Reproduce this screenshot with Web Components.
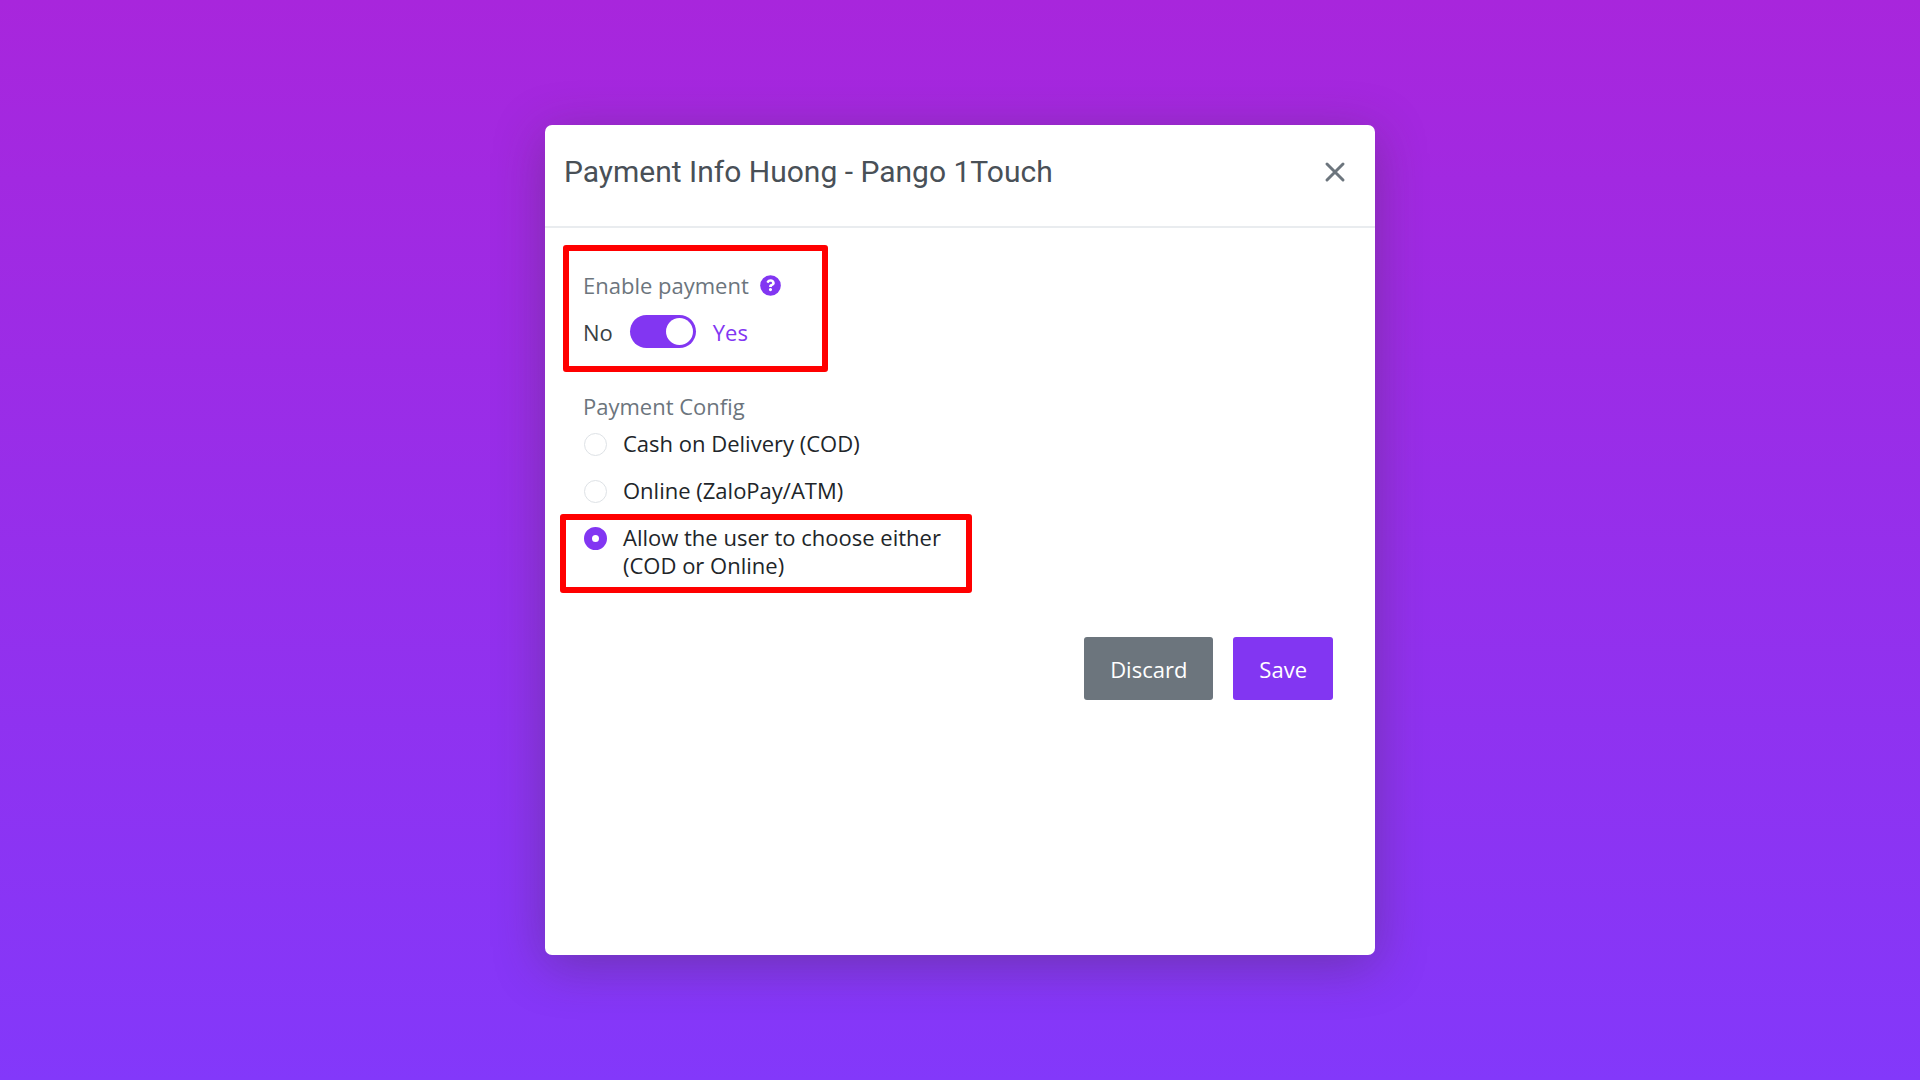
<!DOCTYPE html>
<html lang="en">
<head>
<meta charset="utf-8">
<meta name="viewport" content="width=device-width, initial-scale=1">
<title>Payment Info</title>
<style>
  :root { --accent: #8236f2; --muted: #6c757d; --mark: #ff0000; }
  * { box-sizing: border-box; }
  body {
    margin: 0; min-height: 100vh; display: flex; align-items: center; justify-content: center;
    background: linear-gradient(#a826dc, #8338fa);
    font: 22px/28px "Open Sans", sans-serif; color: #3a3f44;
  }
</style>
</head>
<body>
<payment-dialog>
  <span slot="title">Payment Info Huong - Pango 1Touch</span>
  <marked-area class="enable"><enable-payment></enable-payment></marked-area>
  <payment-config></payment-config>
  <action-button slot="actions" kind="secondary">Discard</action-button>
  <action-button slot="actions" kind="primary">Save</action-button>
</payment-dialog>

<script>
const define = (name, html) => {
  const template = document.createElement('template');
  template.innerHTML = html;
  customElements.define(name, class extends HTMLElement {
    constructor() {
      super();
      this.attachShadow({ mode: 'open' }).append(template.content.cloneNode(true));
    }
  });
};

define('marked-area', `
  <style>
    :host { display: block; box-sizing: border-box; border: 6px solid var(--mark); border-radius: 3px; }
    :host(.enable) { width: 265px; max-width: 100%; margin-left: 3px; padding: 20px 14px 18px; }
  </style>
  <slot></slot>`);

define('enable-payment', `
  <style>
    :host { display: grid; gap: 16px; }
    .head, .row { display: flex; align-items: center; }
    .head { gap: 11px; color: var(--muted); }
    .row { gap: 17px; }
    svg { width: 21px; height: 21px; display: block; }
    .help { padding: 0; border: 0; background: none; }
    input {
      appearance: none; box-sizing: border-box; margin: 0; width: 66px; height: 33px; padding: 3px;
      border-radius: 17px; background: #ced4da; display: flex; cursor: pointer;
    }
    input::before { content: ""; width: 27px; height: 27px; border-radius: 50%; background: #fff; }
    input:checked { background: var(--accent); justify-content: flex-end; }
    .yes { color: var(--accent); }
  </style>
  <div class="head">
    <label for="enable">Enable payment</label>
    <button class="help" type="button" aria-label="Help">
      <svg viewBox="0 0 512 512"><circle cx="256" cy="256" r="252" fill="#8236f2"/><path fill="#fff" transform="translate(38 30) scale(.85)" d="M262.700 90c-54.500 0-89.300 23-116.500 63.800-3.500 5.300-2.400 12.400 2.700 16.300l34.700 26.300c5.200 3.900 12.600 3 16.700-2.100 17.900-22.700 30.100-35.800 57.300-35.800 20.400 0 45.700 13.100 45.700 33 0 15-12.400 22.700-32.500 34C247.100 238.500 216 255 216 296v4c0 6.600 5.400 12 12 12h56c6.600 0 12-5.400 12-12v-1.300c0-28.500 83.200-29.600 83.200-106.700 0-58-60.200-102-116.500-102zM256 338c-25.400 0-46 20.600-46 46s20.600 46 46 46 46-20.600 46-46-20.600-46-46-46z"/></svg>
    </button>
  </div>
  <div class="row">
    <span>No</span>
    <input id="enable" type="checkbox" role="switch" checked>
    <span class="yes">Yes</span>
  </div>`);

define('payment-config', `
  <style>
    :host { display: block; margin-top: 20px; }
    fieldset { margin: 0; padding: 0; border: 0; }
    legend { padding: 0 0 9px 23px; color: var(--muted); }
    .option { display: flex; align-items: flex-start; gap: 16px; color: #212529; }
    fieldset > .option { padding-left: 24px; margin-bottom: 19px; }
    fieldset > .option:last-of-type { margin-bottom: 10px; }
    marked-area { width: 412px; max-width: 100%; padding: 3px 18px 8px; }
    input {
      appearance: none; box-sizing: border-box; flex: none; margin: 4px 0 0; width: 23px; height: 23px;
      border: 1px solid #dee2e6; border-radius: 50%; background: #fff;
    }
    input:checked { border: 8px solid var(--accent); }
  </style>
  <fieldset>
    <legend>Payment Config</legend>
    <div class="option"><input id="cod" type="radio" name="method"><label for="cod">Cash on Delivery (COD)</label></div>
    <div class="option"><input id="online" type="radio" name="method"><label for="online">Online (ZaloPay/ATM)</label></div>
    <marked-area>
      <div class="option"><input id="either" type="radio" name="method" checked><label for="either">Allow the user to choose either<br>(COD or Online)</label></div>
    </marked-area>
  </fieldset>`);

define('action-button', `
  <style>
    :host { display: block; }
    button {
      font: inherit; color: #fff; height: 63px; padding: 0 26px; border: 0; border-radius: 3px;
      background: var(--accent); cursor: pointer;
    }
    :host([kind="secondary"]) button { background: var(--muted); }
  </style>
  <button type="button"><slot></slot></button>`);

define('payment-dialog', `
  <style>
    :host {
      display: block; box-sizing: border-box; width: 830px; max-width: 100%; min-height: 830px;
      background: #fff; border-radius: 7px; box-shadow: 0 10px 50px rgba(60, 50, 50, .35);
    }
    header {
      display: flex; align-items: center; justify-content: space-between;
      padding: 29px 28px 36px 19px; border-bottom: 2px solid #e9ecef;
    }
    h1 { margin: 0; font: 400 30px/36px Roboto, sans-serif; color: #495057; }
    .close { padding: 0; border: 0; background: none; cursor: pointer; }
    svg { display: block; width: 24px; height: 24px; }
    .body { padding: 17px 15px 0; }
    footer { display: flex; justify-content: flex-end; gap: 20px; padding: 44px 42px 44px 19px; }
  </style>
  <header>
    <h1><slot name="title"></slot></h1>
    <button class="close" type="button" aria-label="Close">
      <svg viewBox="0 0 24 24" fill="none" stroke="#6c757d" stroke-width="3" stroke-linecap="round"><path d="M4 4L20 20M20 4L4 20"/></svg>
    </button>
  </header>
  <div class="body"><slot></slot></div>
  <footer><slot name="actions"></slot></footer>`);
</script>
</body>
</html>
